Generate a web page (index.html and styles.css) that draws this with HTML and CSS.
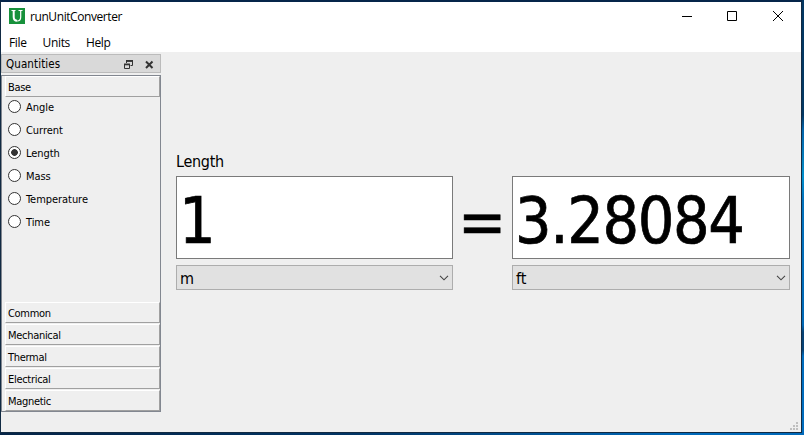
FILE: index.html
```html
<!DOCTYPE html>
<html lang="en">
<head>
<meta charset="utf-8">
<title>runUnitConverter</title>
<link rel="stylesheet" href="styles.css">
</head>
<body>
<div class="window">
  <header class="titlebar">
    <svg class="logo" width="16" height="16" viewBox="0 0 16 16"><rect width="16" height="16" fill="#17913b"/><path d="M2.500 2.500h4M9.500 2.500h4M11.700 2.500v6.500q0 4-3.500 4" fill="none" stroke="#fff" stroke-width="1.200"/><path d="M4.700 2.500v6.500q0 3.800 3.500 3.800" fill="none" stroke="#fff" stroke-width="2"/></svg>
    <span class="title">runUnitConverter</span>
    <svg class="controls" width="102" height="12" viewBox="0 0 102 12" fill="none" stroke="#000"><path d="M0 6.500h10M45.500 1.500h9v9h-9z"/><path d="M91 1l10 10M101 1L91 11"/></svg>
  </header>
  <nav class="menu"><span>File</span><span>Units</span><span>Help</span></nav>
  <div class="body">
    <aside class="dock">
      <div class="dock-title"><span>Quantities</span>
        <svg width="30" height="10" viewBox="0 0 30 10" fill="none" stroke="#333"><path d="M3 1h5.500v4.500H6.500M2.500 3V0.500" /><path d="M2 .9h7" stroke-width="1.8"/><path d="M.5 4.500h5v4h-5z"/><path d="M0 4.400h6" stroke-width="1.8"/><path d="M22 1.500l6.500 6.500M28.500 1.500L22 8" stroke-width="2"/></svg>
      </div>
      <div class="toolbox">
        <div class="tab">Base</div>
        <div class="options">
          <div class="option"><i></i><span>Angle</span></div>
          <div class="option"><i></i><span>Current</span></div>
          <div class="option checked"><i></i><span>Length</span></div>
          <div class="option"><i></i><span>Mass</span></div>
          <div class="option"><i></i><span>Temperature</span></div>
          <div class="option"><i></i><span>Time</span></div>
        </div>
        <div class="tab">Common</div>
        <div class="tab">Mechanical</div>
        <div class="tab">Thermal</div>
        <div class="tab">Electrical</div>
        <div class="tab">Magnetic</div>
      </div>
    </aside>
    <main class="converter">
      <div class="label">Length</div>
      <div class="field">1</div>
      <div class="equals">=</div>
      <div class="field">3.28084</div>
      <div class="select"><span>m</span><svg width="10" height="6" viewBox="0 0 10 6" fill="none" stroke="#444" stroke-width="1.1"><path d="M1 .8l4 4 4-4"/></svg></div>
      <div class="select second"><span>ft</span><svg width="10" height="6" viewBox="0 0 10 6" fill="none" stroke="#444" stroke-width="1.1"><path d="M1 .8l4 4 4-4"/></svg></div>
    </main>
  </div>
  <svg class="grip" width="8" height="8" viewBox="0 0 8 8" fill="#bfbfbf"><path d="M6 0h2v2H6zM3 3h2v2H3zM6 3h2v2H6zM0 6h2v2H0zM3 6h2v2H3zM6 6h2v2H6z"/></svg>
</div>
</body>
</html>
```
FILE: styles.css
```css
* { box-sizing: border-box; }
body {
  margin: 0;
  width: 804px;
  height: 435px;
  overflow: hidden;
  padding: 0 2px 2px 0;
  color: #000;
  font: 11px/13px "DejaVu Sans Condensed", "DejaVu Sans", sans-serif;
  font-stretch: condensed;
  background:
    linear-gradient(#033863 0, #033863 115px, #0365ac 130px, #0584c0 165px, #0090ce 176px, #0272bd 200px, #0068b6 325px, #074275 332px, #074275 350px, #006cbd 356px, #006cbd) right top / 2px 433px no-repeat,
    linear-gradient(90deg, #052447, #013565 45%, #0069b9 85%, #0069b9);
}
.window {
  position: relative;
  height: 433px;
  border: 1px solid #112a43;
  border-top: 2px solid #05254a;
  background: #efefef;
}
.titlebar {
  display: flex;
  align-items: center;
  height: 28px;
  padding: 0 17px 0 8px;
  background: #fff;
}
.title {
  margin: 1px 0 0 5px;
  font: 12px/16px "Open Sans", sans-serif;
  letter-spacing: -0.42px;
}
.controls { margin-left: auto; }
.menu {
  display: flex;
  gap: 16px;
  height: 22px;
  padding: 5px 0 0 8px;
  background: #fff;
  font: 12px/16px "Open Sans", sans-serif;
  letter-spacing: -0.35px;
}
.body { display: flex; height: 360px; padding-top: 2px; }
.dock { width: 160px; }
.dock-title {
  display: flex;
  align-items: center;
  justify-content: space-between;
  height: 19px;
  padding: 2px 6px 0 4px;
  border: 1px solid #bbb;
  background: #d9d9d9;
  font-size: 11.5px;
  letter-spacing: 0.1px;
}
.toolbox {
  display: flex;
  flex-direction: column;
  gap: 1px;
  height: 337px;
  margin-top: 2px;
  padding-left: 3px;
  border: 1px solid #828790;
}
.tab {
  height: 21px;
  padding: 4px 0 0 2px;
  border: 1px solid #fff;
  border-right-color: #a0a0a0;
  border-bottom-color: #a0a0a0;
  letter-spacing: -0.3px;
}
.options { flex: 1; padding-left: 3px; }
.option { display: flex; height: 23px; gap: 5px; letter-spacing: -0.05px; }
.option i {
  width: 13px;
  height: 13px;
  border: 1px solid #333;
  border-radius: 50%;
  background: #fff;
  margin-top: 2px;
}
.option span { padding-top: 3px; }
.checked i { background: radial-gradient(circle, #333 3px, #fff 3.7px); }
.converter {
  display: grid;
  grid-template-columns: 277px 59px 278px;
  grid-template-rows: 24px 83px 25px;
  padding: 98px 0 0 15px;
}
.label {
  grid-column: 1 / -1;
  padding-top: 1px;
  font-size: 16px;
  line-height: 18px;
  letter-spacing: -0.3px;
}
.field {
  height: 83px;
  padding: 5px 2px 0;
  border: 1px solid #7a7a7a;
  background: #fff;
  font-size: 64px;
  line-height: 78px;
  letter-spacing: -1.35px;
  -webkit-text-stroke: 0.7px #000;
}
.equals {
  padding: 7px 0 0 5px;
  font-size: 64px;
  line-height: 78px;
  -webkit-text-stroke: 0.5px #000;
}
.select {
  display: flex;
  align-items: center;
  justify-content: space-between;
  height: 25px;
  margin-top: 6px;
  padding: 2px 3px 0;
  border: 1px solid #adadad;
  background: #e1e1e1;
  font-size: 16px;
  line-height: 20px;
}
.select svg { margin-top: -2px; }
.second { grid-column: 3; }
.grip { position: absolute; right: 3px; bottom: 2px; }
```
